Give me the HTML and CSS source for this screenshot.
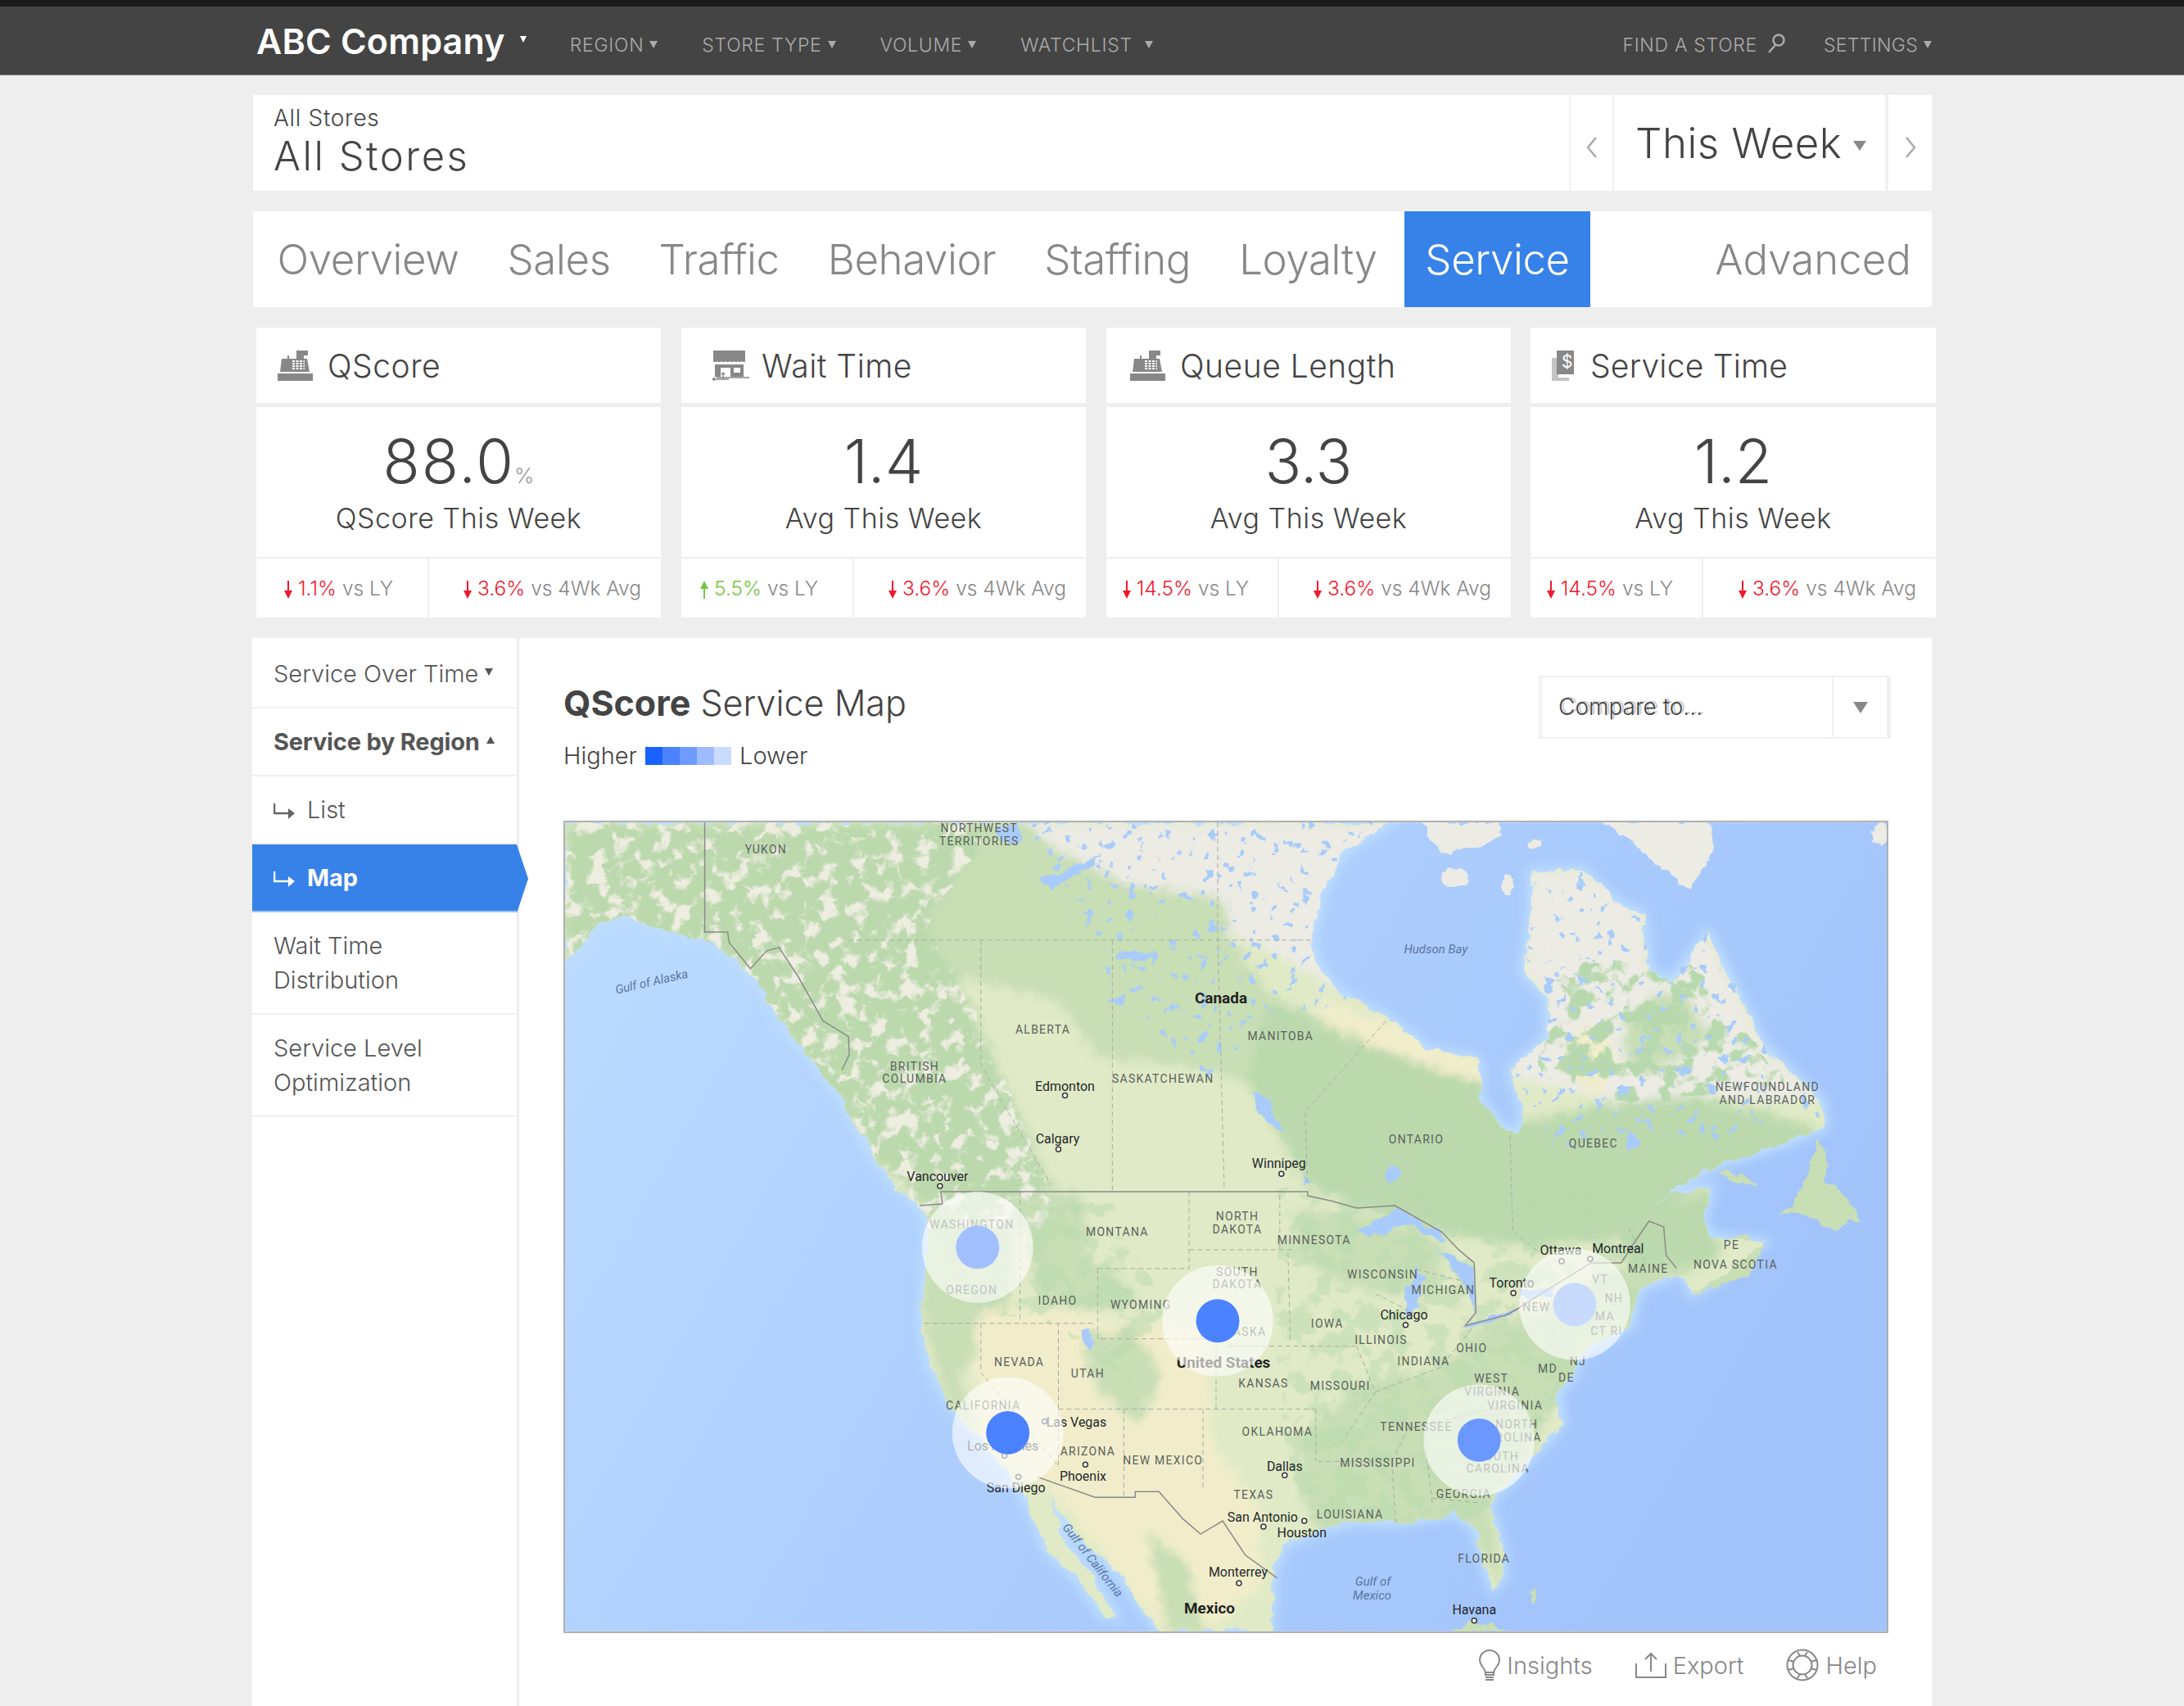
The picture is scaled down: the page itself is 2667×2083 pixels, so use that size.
FILE: index.html
```html
<!DOCTYPE html>
<html lang="en">
<head>
  <meta charset="UTF-8">
  <meta name="viewport" content="width=device-width, initial-scale=1.0">
  <title>ABC Company - Service Map</title>
  <link rel="stylesheet" href="styles.css">
</head>
<body>
  <!-- shared icons -->
  <svg class="icon-defs" aria-hidden="true">
    <defs>
      <symbol id="i-register" viewBox="0 0 43 37">
        <path d="M0 28h43v9H0z"/>
        <path d="M3 26 5 10h7V6h2v4h9V0h14v6h-5v4h4l3 16z"/>
        <path class="i-cut" d="M18 13h15M18 16h15M18 19h15M18 22h15"/>
      </symbol>
      <symbol id="i-store" viewBox="0 0 46 37">
        <path d="M2 0h39v14H2z"/>
        <path class="i-scallop" d="M2 14q2.500 3 5 0q2.500 3 5 0q2.500 3 5 0q2.500 3 5 0q2.500 3 5 0q2.500 3 5 0q2.500 3 5 0q2.500 3 4 0"/>
        <path d="M4 17h35v15H23V21H11v11H4zM27 21v6h8v-6z" fill-rule="evenodd"/>
        <path class="i-line" d="M6 33h40M1 35h20M1 35l3-2M1 35l3 2M14 35v-8M14 27l-2 2M14 27l2 2"/>
      </symbol>
      <symbol id="i-bill" viewBox="0 0 27 37">
        <path class="i-pale" d="M0 9h8v24h13v4H0z"/>
        <path d="M6 0h21v29H6z"/>
      </symbol>
      <symbol id="i-down" viewBox="0 0 10 22">
        <path d="M4 0h2v12h4l-5 10-5-10h4z"/>
      </symbol>
      <symbol id="i-up" viewBox="0 0 10 22">
        <path d="M4 22h2V10h4L5 0 0 10h4z"/>
      </symbol>
      <symbol id="i-sub" viewBox="0 0 26 20">
        <path class="i-bent" d="M1 0v12h18"/>
        <path class="i-head" d="M18 6l8 6-8 7z"/>
      </symbol>
    </defs>
  </svg>

  <header class="topbar">
    <div class="wrap topbar-inner">
      <a class="brand">ABC Company<i class="caret caret-brand"></i></a>
      <nav class="topnav">
        <a>Region<i class="caret"></i></a>
        <a>Store Type<i class="caret"></i></a>
        <a>Volume<i class="caret"></i></a>
        <a>Watchlist<i class="caret caret-far"></i></a>
      </nav>
      <nav class="topnav topnav-right">
        <a>Find a Store
          <svg class="search-icon" viewBox="0 0 22 24"><circle cx="14" cy="8" r="6.500"/><path d="M10 14 2 23"/></svg>
        </a>
        <a class="settings">Settings<i class="caret"></i></a>
      </nav>
    </div>
  </header>

  <div class="wrap">
    <section class="page-head">
      <div class="page-title">
        <div class="crumb">All Stores</div>
        <h1>All Stores</h1>
      </div>
      <a class="period-nav"><svg class="chev" viewBox="0 0 14 26"><path d="M12 1 2 13l10 12"/></svg></a>
      <a class="period">This Week<i class="caret caret-period"></i></a>
      <a class="period-nav period-next"><svg class="chev" viewBox="0 0 14 26"><path d="M2 1l10 12L2 25"/></svg></a>
    </section>

    <nav class="tabs">
      <a>Overview</a>
      <a>Sales</a>
      <a>Traffic</a>
      <a>Behavior</a>
      <a>Staffing</a>
      <a>Loyalty</a>
      <a class="active">Service</a>
      <a class="tab-end">Advanced</a>
    </nav>

    <section class="kpis">
      <article class="kpi">
        <h2><svg class="kpi-icon"><use href="#i-register"/></svg>QScore</h2>
        <div class="kpi-body">
          <div class="kpi-num kpi-num-wide">88.0<span class="unit">%</span></div>
          <div class="kpi-sub">QScore This Week</div>
        </div>
        <div class="kpi-foot">
          <div class="cmp cmp-ly"><svg class="arr down"><use href="#i-down"/></svg><b class="neg">1.1%</b> vs LY</div>
          <div class="cmp"><svg class="arr down"><use href="#i-down"/></svg><b class="neg">3.6%</b> vs 4Wk Avg</div>
        </div>
      </article>
      <article class="kpi kpi-store">
        <h2><svg class="kpi-icon"><use href="#i-store"/></svg>Wait Time</h2>
        <div class="kpi-body">
          <div class="kpi-num">1.4</div>
          <div class="kpi-sub">Avg This Week</div>
        </div>
        <div class="kpi-foot">
          <div class="cmp cmp-ly"><svg class="arr up"><use href="#i-up"/></svg><b class="pos">5.5%</b> vs LY</div>
          <div class="cmp"><svg class="arr down"><use href="#i-down"/></svg><b class="neg">3.6%</b> vs 4Wk Avg</div>
        </div>
      </article>
      <article class="kpi kpi-queue">
        <h2><svg class="kpi-icon"><use href="#i-register"/></svg>Queue Length</h2>
        <div class="kpi-body">
          <div class="kpi-num">3.3</div>
          <div class="kpi-sub">Avg This Week</div>
        </div>
        <div class="kpi-foot">
          <div class="cmp cmp-ly cmp-long"><svg class="arr down"><use href="#i-down"/></svg><b class="neg">14.5%</b> vs LY</div>
          <div class="cmp"><svg class="arr down"><use href="#i-down"/></svg><b class="neg">3.6%</b> vs 4Wk Avg</div>
        </div>
      </article>
      <article class="kpi kpi-time">
        <h2><span class="bill"><svg class="kpi-icon kpi-icon-bill"><use href="#i-bill"/></svg><span class="bill-sign">$</span></span>Service Time</h2>
        <div class="kpi-body">
          <div class="kpi-num">1.2</div>
          <div class="kpi-sub">Avg This Week</div>
        </div>
        <div class="kpi-foot">
          <div class="cmp cmp-ly cmp-long"><svg class="arr down"><use href="#i-down"/></svg><b class="neg">14.5%</b> vs LY</div>
          <div class="cmp"><svg class="arr down"><use href="#i-down"/></svg><b class="neg">3.6%</b> vs 4Wk Avg</div>
        </div>
      </article>
    </section>

    <section class="panel">
      <aside class="sidenav">
        <a>Service Over Time<i class="caret caret-side"></i></a>
        <a class="open">Service by Region<i class="caret caret-side caret-up"></i></a>
        <a class="sub"><svg class="sub-icon"><use href="#i-sub"/></svg>List</a>
        <a class="sub current"><svg class="sub-icon"><use href="#i-sub"/></svg>Map</a>
        <a>Wait Time<br>Distribution</a>
        <a>Service Level<br>Optimization</a>
      </aside>

      <main class="content">
        <div class="content-head">
          <div>
            <h3><strong>QScore</strong> Service Map</h3>
            <div class="legend">
              Higher
              <span class="scale"><i class="s1"></i><i class="s2"></i><i class="s3"></i><i class="s4"></i><i class="s5"></i></span>
              Lower
            </div>
          </div>
          <div class="compare">
            <span class="compare-text">Compare to...</span>
            <span class="compare-btn"><i class="caret caret-compare"></i></span>
          </div>
        </div>

        <!-- map: drawn in page pixels, hence the viewBox offset -->
        <svg class="map" viewBox="688 1003 1618 990">
          <defs>
            <linearGradient id="sea" x1="0" y1="0" x2="1" y2="0.35">
              <stop offset="0" stop-color="#bddcff"/>
              <stop offset=".35" stop-color="#b1d2fe"/>
              <stop offset="1" stop-color="#a2c4fb"/>
            </linearGradient>
            <path id="land" d="M688 1003H1699L1673 1019 1640 1040 1615 1089 1602 1147 1610 1179 1636 1211 1699 1246 1746 1281 1806 1293 1809 1345 1835 1376 1856 1386 1861 1357 1845 1306 1890 1268 1892 1220 1861 1185 1871 1115 1871 1064 1934 1061 1976 1102 2007 1115 2015 1185 2044 1198 2086 1137 2127 1217 2154 1274 2180 1300 2227 1345 2230 1376 2180 1396 2101 1421 2049 1447 1997 1504 2039 1459 2091 1450 2080 1491 2091 1510 2156 1517 2101 1561 2067 1581 2062 1561 2049 1555 2002 1574 1992 1619 1934 1651 1924 1676 1903 1702 1908 1740 1866 1785 1819 1836 1835 1893 1837 1925 1824 1943 1811 1906 1803 1868 1777 1849 1709 1861 1657 1858 1615 1868 1568 1887 1555 1919 1552 1993H1415L1363 1919 1306 1868 1283 1823 1297 1880 1329 1919 1363 1976 1346 1973 1317 1931 1277 1893 1254 1836 1231 1798 1185 1746 1156 1708 1133 1663 1125 1619 1128 1561 1133 1504 1125 1475 1093 1447 1065 1412 1024 1338 984 1287 956 1252 927 1204 892 1166 858 1144 812 1137 766 1118 732 1124 709 1153 688 1172Z"/>
            <clipPath id="land-clip"><use href="#land"/></clipPath>
            <clipPath id="mtn-clip"><path d="M688 1003H1197V1032L1128 1128 1168 1191 1283 1447V1500H1125L1065 1412 892 1166 688 1172Z"/></clipPath>
            <clipPath id="rock-clip"><path d="M1125 1470H1360L1420 1600 1380 1690 1290 1620 1190 1600Z"/></clipPath>
            <clipPath id="north-clip"><path d="M1254 1003H1699L1640 1230 1540 1240 1480 1330 1360 1200ZM1861 1064H2100L2240 1370 2040 1400 1900 1400 1845 1300Z"/></clipPath>
            <clipPath id="east-clip"><path d="M1560 1450H1990L2050 1560 1900 1720 1800 1860 1600 1860 1560 1740Z"/></clipPath>
            <clipPath id="quebec-clip"><path d="M1900 1180 2060 1170 2180 1320 2000 1350 1880 1310Z"/></clipPath>
            <filter id="rough" x="0" y="0" width="1" height="1" color-interpolation-filters="sRGB">
              <feTurbulence type="fractalNoise" baseFrequency=".06" numOctaves="3" seed="7" result="n"/>
              <feDisplacementMap in="SourceGraphic" in2="n" scale="14" xChannelSelector="R" yChannelSelector="G"/>
            </filter>
            <filter id="soft" x="-.05" y="-.05" width="1.100" height="1.100"><feGaussianBlur stdDeviation="6"/></filter>
            <filter id="glow" x="-.1" y="-.1" width="1.200" height="1.200"><feGaussianBlur stdDeviation="7"/></filter>
            <filter id="mottle-pale" x="0" y="0" width="1" height="1" color-interpolation-filters="sRGB">
              <feTurbulence type="fractalNoise" baseFrequency=".05" numOctaves="5" seed="4"/>
              <feColorMatrix type="matrix" values="0 0 0 0 .93 0 0 0 0 .93 0 0 0 0 .88 7 0 0 0 -3.600"/>
            </filter>
            <filter id="mottle-green" x="0" y="0" width="1" height="1" color-interpolation-filters="sRGB">
              <feTurbulence type="fractalNoise" baseFrequency=".035" numOctaves="5" seed="11"/>
              <feColorMatrix type="matrix" values="0 0 0 0 .72 0 0 0 0 .85 0 0 0 0 .68 9 0 0 0 -4.300"/>
            </filter>
            <filter id="speckle" x="0" y="0" width="1" height="1" color-interpolation-filters="sRGB">
              <feTurbulence type="fractalNoise" baseFrequency=".08" numOctaves="2" seed="21"/>
              <feColorMatrix type="matrix" values="0 0 0 0 .66 0 0 0 0 .8 0 0 0 0 .98 22 0 0 0 -14.400"/>
            </filter>
          </defs>

          <rect class="sea" x="688" y="1003" width="1618" height="990"/>
          <use class="coast-glow" href="#land"/>

          <g filter="url(#rough)">
            <g class="islands">
              <path d="M2172 1485 2190 1472 2203 1447 2214 1415 2224 1392 2232 1415 2230 1440 2248 1453 2269 1475 2277 1494 2258 1491 2243 1504 2217 1491 2193 1478Z"/>
              <path d="M2067 1581 2101 1561 2156 1517 2140 1555Z"/>
              <path d="M2105 1512 2135 1507 2140 1515 2110 1518Z"/>
              <path d="M2100 1430 2130 1435 2150 1447 2120 1445Z"/>
              <path class="pale" d="M1955 1003H2091L2094 1038 2065 1086 2023 1051 1992 1026Z"/>
              <path class="pale" d="M1738 1003H1830L1835 1015 1800 1035 1760 1040 1745 1020Z"/>
              <ellipse class="pale" cx="1777" cy="1070" rx="18" ry="11"/>
              <ellipse class="pale" cx="1842" cy="1080" rx="7" ry="14"/>
              <ellipse class="pale" cx="1875" cy="1030" rx="8" ry="5"/>
              <ellipse class="pale" cx="2298" cy="1018" rx="10" ry="14"/>
              <path d="M1772 1993 1798 1979 1845 1993Z"/>
              <ellipse cx="1872" cy="1948" rx="3" ry="9"/>
            </g>

            <g clip-path="url(#land-clip)">
              <rect class="base" x="688" y="1003" width="1618" height="990"/>

              <!-- vegetation, north to south -->
              <g filter="url(#soft)">
                <path class="forest" d="M1197 1003H1254L1283 1032 1369 1077 1495 1096 1500 1140 1552 1217 1521 1319 1440 1300 1340 1290 1290 1220 1168 1191 1128 1128 1197 1032Z"/>
                <path class="forest-deep" d="M1552 1217 1631 1255 1693 1281 1803 1313 1861 1370 1971 1345 2075 1338 2222 1376 2180 1415 2075 1447 1997 1510 1866 1523 1761 1504 1657 1472 1594 1447 1568 1396 1521 1319Z"/>
                <path class="tundra" d="M1254 1003H1699L1640 1211 1552 1160 1500 1140 1495 1096 1369 1077 1283 1032Z"/>
                <path class="tundra" d="M1871 1064 1934 1061 2007 1115 2015 1185 2086 1137 2154 1274 2227 1345 2075 1338 1971 1345 1845 1313 1892 1220 1861 1185Z"/>
                <path class="forest" d="M1985 1240 2030 1210 2060 1215 2090 1265 2050 1295 2005 1310 1985 1285Z"/>
                <path class="sand" d="M1620 1222 1700 1250 1810 1296 1820 1325 1740 1300 1660 1270 1600 1240Z"/>
                <path class="sand" d="M1915 1260 1960 1250 1975 1290 1955 1340 1915 1310Z"/>
                <path class="forest-deep" d="M1980 1500 2090 1450 2100 1500 2100 1540 2050 1555 1990 1570Z"/>
                <path class="forest-deep" d="M688 1003H1197V1032L1128 1128 1168 1191 1283 1447V1470H1125L1065 1412 892 1166 688 1172Z"/>

                <path class="forest" d="M1125 1470H1240L1230 1600 1170 1680 1195 1750 1150 1700 1125 1600Z"/>
                <path class="forest" d="M1240 1455H1320L1330 1540 1370 1560 1390 1590 1320 1600 1270 1580Z"/>
                <path class="sand" d="M1195 1600H1310L1350 1615 1470 1620 1480 1760 1540 1850 1540 1940 1470 1993H1420L1340 1890 1283 1820 1230 1790 1190 1740 1190 1640Z"/>
                <path class="forest" d="M1320 1640 1380 1620 1420 1680 1390 1740 1340 1700Z"/>
                <path class="forest" d="M1400 1870 1450 1910 1470 1993H1425Z"/>
                <path class="forest" d="M1580 1480H1660L1770 1520 1750 1580 1680 1580 1620 1560 1590 1530Z"/>
                <path class="forest" d="M1590 1760 1660 1690 1760 1670 1810 1620 1900 1600 1950 1560 2050 1540 2000 1620 1903 1702 1866 1785 1819 1836 1840 1950 1790 1860 1709 1870 1615 1880 1590 1830Z"/>
              </g>

              <!-- terrain texture -->
              <g clip-path="url(#mtn-clip)">
                <rect class="tex" filter="url(#mottle-pale)" x="688" y="1003" width="620" height="520"/>
              </g>
              <g clip-path="url(#rock-clip)">
                <rect class="tex tex-faint" filter="url(#mottle-green)" x="1125" y="1450" width="310" height="250"/>
              </g>
              <g clip-path="url(#east-clip)">
                <rect class="tex tex-faint" filter="url(#mottle-green)" x="1560" y="1450" width="500" height="420"/>
              </g>
              <g clip-path="url(#quebec-clip)">
                <rect class="tex" filter="url(#mottle-green)" x="1880" y="1170" width="300" height="180"/>
              </g>
              <g clip-path="url(#north-clip)">
                <rect class="tex" filter="url(#speckle)" x="1254" y="1003" width="990" height="400"/>
              </g>

              <!-- lakes -->
              <g class="lake">
                <path d="M1657 1504 1709 1475 1756 1504 1767 1517 1720 1494 1678 1510Z"/>
                <path d="M1718 1606 1715 1580 1730 1548 1740 1560 1730 1600Z"/>
                <path d="M1756 1523 1801 1549 1803 1606 1793 1577 1777 1549Z"/>
                <path d="M1788 1619 1856 1597 1845 1606 1798 1622Z"/>
                <path d="M1856 1577 1900 1571 1895 1580 1860 1587Z"/>
                <path d="M1531 1332 1550 1345 1568 1383 1552 1375 1535 1352Z"/>
                <path d="M1268 1072 1300 1062 1345 1042 1312 1070 1282 1085Z"/>
                <path d="M1212 1010 1240 1005 1245 1025 1222 1030Z"/>
                <path d="M1358 1168 1385 1160 1412 1170 1385 1172Z"/>
                <ellipse cx="1701" cy="1434" rx="9" ry="11"/>
                <ellipse cx="1995" cy="1393" rx="8" ry="9"/>
                <path d="M1590 1435 1600 1445 1590 1450Z"/>
                <path d="M1350 1220 1375 1215 1370 1228Z"/>
                <ellipse cx="1328" cy="1635" rx="5" ry="12"/>
              </g>
            </g>
          </g>

          <!-- borders -->
          <path class="edge-soft" d="M1035 1147H1602M1197 1147V1300L1283 1447M1358 1147V1453M1487 1003V1147L1495 1453M1693 1246 1594 1357 1597 1447M1845 1386 1848 1504 1882 1530M1245 1455V1612M1128 1616H1334M1340 1549V1635H1500M1340 1549H1452V1455M1452 1526H1580M1197 1616V1676L1292 1791V1616M1292 1721H1607M1372 1721V1829M1469 1721V1817M1485 1635V1721M1563 1459V1526M1573 1530 1576 1638M1500 1644H1657M1607 1721V1785M1657 1644 1680 1700 1640 1760M1680 1700 1760 1670 1800 1620M1610 1785H1700L1720 1745 1850 1715M1700 1785 1705 1860M1740 1750 1750 1840M1750 1830 1810 1836M1790 1770 1830 1800 1866 1770M1730 1550 1790 1565M1680 1580 1740 1610M1990 1500 2010 1540"/>
          <path class="edge" d="M859 1003V1137H887L889 1150 915 1182 935 1160 950 1156 973 1191 1004 1246 1035 1265 1036 1287 1027 1306M1122 1472 1150 1470 1148 1455H1597V1460L1625 1466 1657 1475 1704 1472 1761 1504 1782 1526 1801 1542 1803 1603 1790 1619 1840 1606 1856 1597 1897 1571 1944 1542H1981L1997 1517 2015 1491 2033 1498 2036 1533 2049 1549M1266 1804 1337 1829H1386V1822H1415L1444 1855 1466 1874 1493 1858 1521 1900 1560 1928"/>

          <!-- labels -->
          <g class="lbl-state">
            <text x="934" y="1036">YUKON</text>
            <text x="1195" y="1010">NORTHWEST</text><text x="1195" y="1026">TERRITORIES</text>
            <text x="1273" y="1256">ALBERTA</text>
            <text x="1116" y="1302">BRITISH</text><text x="1116" y="1317">COLUMBIA</text>
            <text x="1420" y="1317">SASKATCHEWAN</text>
            <text x="1564" y="1264">MANITOBA</text>
            <text x="1730" y="1391">ONTARIO</text>
            <text x="1947" y="1396">QUEBEC</text>
            <text x="2160" y="1327">NEWFOUNDLAND</text><text x="2160" y="1343">AND LABRADOR</text>
            <text x="2116" y="1520">PE</text>
            <text x="2121" y="1544">NOVA SCOTIA</text>
            <text x="2014" y="1549">MAINE</text>
            <text x="1186" y="1495">WASHINGTON</text>
            <text x="1186" y="1575">OREGON</text>
            <text x="1364" y="1504">MONTANA</text>
            <text x="1291" y="1588">IDAHO</text>
            <text x="1393" y="1593">WYOMING</text>
            <text x="1511" y="1485">NORTH</text><text x="1511" y="1501">DAKOTA</text>
            <text x="1511" y="1553">SOUTH</text><text x="1511" y="1568">DAKOTA</text>
            <text x="1506" y="1626">NEBRASKA</text>
            <text x="1543" y="1689">KANSAS</text>
            <text x="1244" y="1663">NEVADA</text>
            <text x="1328" y="1677">UTAH</text>
            <text x="1200" y="1717">CALIFORNIA</text>
            <text x="1328" y="1773">ARIZONA</text>
            <text x="1420" y="1784">NEW MEXICO</text>
            <text x="1560" y="1749">OKLAHOMA</text>
            <text x="1531" y="1826">TEXAS</text>
            <text x="1605" y="1514">MINNESOTA</text>
            <text x="1621" y="1616">IOWA</text>
            <text x="1637" y="1692">MISSOURI</text>
            <text x="1689" y="1556">WISCONSIN</text>
            <text x="1763" y="1575">MICHIGAN</text>
            <text x="1687" y="1636">ILLINOIS</text>
            <text x="1739" y="1662">INDIANA</text>
            <text x="1798" y="1646">OHIO</text>
            <text x="1730" y="1743">TENNESSEE</text>
            <text x="1683" y="1787">MISSISSIPPI</text>
            <text x="1649" y="1850">LOUISIANA</text>
            <text x="1788" y="1825">GEORGIA</text>
            <text x="1813" y="1904">FLORIDA</text>
            <text x="1822" y="1683">WEST</text><text x="1823" y="1699">VIRGINIA</text>
            <text x="1851" y="1717">VIRGINIA</text>
            <text x="1853" y="1740">NORTH</text><text x="1845" y="1756">CAROLINA</text>
            <text x="1830" y="1779">SOUTH</text><text x="1830" y="1794">CAROLINA</text>
            <text x="1900" y="1596">NEW YORK</text>
            <text x="1955" y="1562">VT</text>
            <text x="1972" y="1585">NH</text>
            <text x="1961" y="1607">MA</text>
            <text x="1963" y="1625">CT RI</text>
            <text x="1891" y="1671">MD</text>
            <text x="1914" y="1682">DE</text>
            <text x="1928" y="1662">NJ</text>
          </g>
          <g class="lbl-city">
            <text x="1300" y="1326">Edmonton</text>
            <text x="1291" y="1390">Calgary</text>
            <text x="1144" y="1436">Vancouver</text>
            <text x="1562" y="1420">Winnipeg</text>
            <text x="1314" y="1737">Las Vegas</text>
            <text x="1224" y="1766">Los Angeles</text>
            <text x="1322" y="1803">Phoenix</text>
            <text x="1240" y="1817">San Diego</text>
            <text x="1569" y="1791">Dallas</text>
            <text x="1542" y="1853">San Antonio</text>
            <text x="1590" y="1872">Houston</text>
            <text x="1512" y="1921">Monterrey</text>
            <text x="1801" y="1967">Havana</text>
            <text x="1715" y="1606">Chicago</text>
            <text x="1847" y="1567">Toronto</text>
            <text x="1907" y="1527">Ottawa</text>
            <text x="1977" y="1525">Montreal</text>
          </g>
          <g class="lbl-country">
            <text x="1491" y="1218">Canada</text>
            <text x="1494" y="1664">United States</text>
            <text x="1477" y="1965">Mexico</text>
          </g>
          <g class="lbl-water">
            <text x="794" y="1198" transform="rotate(-13 794 1198)">Gulf of Alaska</text>
            <text x="1334" y="1906" transform="rotate(52 1334 1906)">Gulf of California</text>
            <text x="1754" y="1158">Hudson Bay</text>
            <text x="1677" y="1932">Gulf of</text><text x="1676" y="1949">Mexico</text>
          </g>
          <g class="city-dot">
            <circle cx="1300" cy="1337" r="3"/><circle cx="1292" cy="1403" r="3"/><circle cx="1147" cy="1448" r="3"/>
            <circle cx="1565" cy="1433" r="3"/><circle cx="1275" cy="1736" r="3"/><circle cx="1226" cy="1778" r="3"/>
            <circle cx="1325" cy="1789" r="3"/><circle cx="1243" cy="1804" r="3"/><circle cx="1569" cy="1802" r="3"/>
            <circle cx="1543" cy="1865" r="3"/><circle cx="1593" cy="1858" r="3"/><circle cx="1513" cy="1934" r="3"/>
            <circle cx="1801" cy="1980" r="3"/><circle cx="1717" cy="1618" r="3"/><circle cx="1849" cy="1579" r="3"/>
            <circle cx="1908" cy="1540" r="3"/><circle cx="1943" cy="1537" r="3"/>
          </g>

          <!-- store pins -->
          <g class="pin-halo">
            <circle cx="1193" cy="1523" r="68"/><circle cx="1487" cy="1613" r="68"/><circle cx="1230" cy="1750" r="68"/>
            <circle cx="1807" cy="1759" r="68"/><circle cx="1924" cy="1593" r="68"/>
          </g>
          <circle class="pin p4" cx="1193" cy="1523" r="26.500"/>
          <circle class="pin p2" cx="1487" cy="1613" r="26.500"/>
          <circle class="pin p2" cx="1230" cy="1750" r="26.500"/>
          <circle class="pin p3" cx="1807" cy="1759" r="26.500"/>
          <circle class="pin p5" cx="1924" cy="1593" r="26.500"/>
        </svg>

        <div class="map-links">
          <a><svg class="link-icon bulb" viewBox="0 0 26 39"><path d="M8 28C7 22 1 20 1 13a12 12 0 0 1 24 0c0 7-6 9-7 15zM8 28v3h10v-3M8 34h10M8 37h10"/></svg>Insights</a>
          <a><svg class="link-icon share" viewBox="0 0 38 32"><path d="M1 14v17h36V14M19 24V2M12 9l7-7 7 7"/></svg>Export</a>
          <a><svg class="link-icon buoy" viewBox="0 0 40 40"><circle cx="20" cy="20" r="18.500"/><circle cx="20" cy="20" r="11.500"/><path d="M14 4l3 5M26 4l-3 5M3 14l7 2M37 14l-7 2M3 26l7-2M37 26l-7-2M14 36l3-5M26 36l-3-5"/></svg>Help</a>
        </div>
      </main>
    </section>
  </div>
</body>
</html>
```

FILE: styles.css
```css
* {
  margin: 0;
  padding: 0;
  box-sizing: border-box;
}

body {
  font-family: Inter, 'Liberation Sans', sans-serif;
  font-weight: 300;
  background-color: #eeeeee;
  color: #444;
  height: 100vh;
  overflow: hidden;
}

.icon-defs {
  position: absolute;
  width: 0;
  height: 0;
}

.wrap {
  width: 2050px;
  margin-left: 309px;
}

/* Carets */
.caret {
  display: inline-block;
  width: 0;
  height: 0;
  margin-left: 7px;
  border-left: 5px solid transparent;
  border-right: 5px solid transparent;
  border-top: 9px solid currentColor;
  vertical-align: 3px;
}

.caret-brand {
  margin-left: 18px;
  vertical-align: 14px;
  border-top-width: 8px;
  border-left-width: 4px;
  border-right-width: 4px;
}

.caret-far {
  margin-left: 15px;
}

.caret-period {
  margin-left: 14px;
  color: #888;
  border-left-width: 8px;
  border-right-width: 8px;
  border-top-width: 12px;
  vertical-align: 10px;
}

.caret-side {
  margin-left: 8px;
  vertical-align: 8px;
  border-top-width: 9px;
}

.caret-up {
  border-top: 0;
  border-bottom: 9px solid currentColor;
}

.caret-compare {
  margin: 0;
  color: #888;
  border-left-width: 9px;
  border-right-width: 9px;
  border-top-width: 14px;
  vertical-align: middle;
}

/* Top bar */
.topbar {
  height: 92px;
  background-color: #444;
  border-top: 8px solid #1a1a1a;
  border-bottom: 1px solid #777;
  color: #aaa;
}

.topbar-inner {
  display: flex;
  align-items: center;
  height: 83px;
  padding-left: 4px;
}

.brand {
  color: #fff;
  font-size: 43px;
  font-weight: 600;
  letter-spacing: 0.2px;
  white-space: nowrap;
}

.topnav {
  display: flex;
  gap: 54px;
  margin-left: 53px;
  padding-top: 10px;
}

.topnav a {
  font-size: 23px;
  letter-spacing: 0.7px;
  text-transform: uppercase;
  white-space: nowrap;
  display: flex;
  align-items: center;
}

.topnav .caret {
  vertical-align: 0;
}

.topnav-right {
  margin-left: auto;
  gap: 47px;
}

.topnav .settings {
  letter-spacing: 0.3px;
}

.search-icon {
  width: 22px;
  height: 24px;
  margin-left: 12px;
  margin-top: -4px;
  fill: none;
  stroke: #aaa;
  stroke-width: 2.500;
}

/* Page header */
.page-head {
  display: flex;
  height: 117px;
  margin-top: 24px;
  background-color: #fff;
}

.page-title {
  flex: 1;
  padding: 11px 25px 0;
}

.crumb {
  font-size: 28px;
  letter-spacing: 0.7px;
  line-height: 34px;
}

.page-title h1 {
  font-size: 49px;
  font-weight: 300;
  letter-spacing: 2.500px;
  line-height: 58px;
  margin-top: 1px;
}

.period-nav {
  display: flex;
  justify-content: center;
  align-items: center;
  width: 53px;
  padding-top: 11px;
  border-left: 2px solid #f0f0f0;
}

.period-next {
  width: 55px;
}

.chev {
  width: 14px;
  height: 26px;
  fill: none;
  stroke: #aaa;
  stroke-width: 2.500;
}

.period {
  display: flex;
  align-items: center;
  width: 335px;
  padding: 0 0 0 26px;
  border-left: 2px solid #f0f0f0;
  border-right: 2px solid #f0f0f0;
  font-size: 51px;
  letter-spacing: 0.5px;
  white-space: nowrap;
}

.period .caret {
  vertical-align: 0;
  margin-top: 6px;
}

/* Tabs */
.tabs {
  display: flex;
  height: 117px;
  margin-top: 25px;
  background-color: #fff;
  font-size: 51px;
  letter-spacing: -0.4px;
  line-height: 117px;
  color: #888;
}

.tabs a {
  padding: 0 29.500px;
  white-space: nowrap;
}

.tabs a.active {
  margin-left: 4px;
  padding: 0 25px;
  background-color: #3682e8;
  color: #fff;
}

.tabs .tab-end {
  margin-left: auto;
  padding-right: 25px;
  letter-spacing: 0;
}

/* KPI cards */
.kpis {
  display: grid;
  grid-template-columns: repeat(4, 494px);
  gap: 25px;
  margin: 25px 0 0 4px;
}

.kpi {
  background-color: #fff;
}

.kpi h2 {
  display: flex;
  align-items: center;
  height: 97px;
  padding: 0 0 0 26px;
  border-bottom: 5px solid #eee;
  font-size: 39px;
  font-weight: 300;
  letter-spacing: 0.5px;
  white-space: nowrap;
}

.kpi-store h2 {
  padding-left: 37px;
}

.kpi-store .kpi-icon {
  width: 46px;
  margin-right: 15px;
}

.kpi-queue h2 {
  padding-left: 29px;
}

.kpi-time {
  margin-left: -1px;
}

.kpi-time h2 {
  letter-spacing: 0.2px;
}

.kpi-icon {
  width: 43px;
  height: 37px;
  margin-right: 18px;
  fill: #888;
  flex: none;
}

.i-cut {
  fill: none;
  stroke: #fff;
  stroke-width: 2;
  stroke-dasharray: 3 1.500;
}

.i-scallop {
  fill: none;
  stroke: #fff;
  stroke-width: 1.500;
}

.i-line {
  fill: none;
  stroke: #888;
  stroke-width: 1.500;
}

.i-pale {
  fill: #c4c4c4;
}

.bill {
  position: relative;
  display: block;
  margin-right: 20px;
  height: 37px;
}

.kpi-icon-bill {
  display: block;
  width: 27px;
  margin: 0;
}

.bill-sign {
  position: absolute;
  left: 12px;
  top: 1px;
  font-size: 21px;
  font-weight: 400;
  color: #fff;
  letter-spacing: 0;
}

.kpi-body {
  height: 185px;
  padding-top: 26px;
  text-align: center;
  border-bottom: 2px solid #eee;
}

.kpi-num {
  font-size: 74px;
  line-height: 80px;
}

.kpi-num-wide {
  letter-spacing: 2px;
}

.unit {
  margin-left: -1px;
  font-size: 26px;
  line-height: 22px;
  letter-spacing: 0;
  color: #999;
}

.kpi-sub {
  margin-top: 10px;
  font-size: 34px;
  letter-spacing: 0.5px;
  line-height: 40px;
}

.kpi-foot {
  display: grid;
  grid-template-columns: 211px 1fr;
  height: 72px;
  font-size: 24.500px;
  color: #888;
}

.cmp {
  display: flex;
  align-items: center;
  justify-content: flex-end;
  padding-right: 24px;
  white-space: pre;
}

.cmp-ly {
  padding-right: 42px;
  border-right: 2px solid #eee;
}

.cmp-long {
  padding-right: 35px;
}

.cmp b {
  font-weight: 300;
}

.arr {
  width: 10px;
  height: 22px;
  margin-right: 7px;
  margin-top: 3px;
}

.arr.down {
  fill: #f0192c;
}

.arr.up {
  fill: #76c442;
}

.neg {
  color: #f0192c;
}

.pos {
  color: #76c442;
}

/* Lower panel */
.panel {
  display: flex;
  height: 1400px;
  margin: 25px 0 0 -1px;
  background-color: #fff;
}

.sidenav {
  width: 326px;
  flex: none;
  padding-top: 3px;
  border-right: 3px solid #eee;
  font-size: 29px;
  color: #555;
}

.sidenav a {
  display: block;
  position: relative;
  width: 323px;
  padding: 19.500px 0 19.500px 26px;
  line-height: 42px;
  border-bottom: 2px solid #f0f0f0;
  white-space: nowrap;
}

.sidenav .open {
  font-weight: 700;
  letter-spacing: -0.2px;
}

.sub-icon {
  width: 26px;
  height: 20px;
  margin-right: 15px;
  vertical-align: -2px;
  color: #666;
}

.i-bent {
  fill: none;
  stroke: currentColor;
  stroke-width: 2.500;
}

.i-head {
  fill: currentColor;
}

.sidenav .current {
  background-color: #3682e8;
  color: #fff;
  font-weight: 700;
  border-bottom: 2px solid #9fc2f3;
}

.sidenav .current .sub-icon {
  color: #fff;
}

.sidenav .current::after {
  content: "";
  position: absolute;
  left: 100%;
  top: 0;
  border-left: 14px solid #3682e8;
  border-top: 42px solid transparent;
  border-bottom: 42px solid transparent;
}

.content {
  flex: 1;
  padding: 46px 52px 0 54px;
}

.content-head {
  display: flex;
  justify-content: space-between;
  align-items: flex-start;
  height: 177px;
}

.content-head h3 {
  margin-top: 8px;
  font-size: 43px;
  font-weight: 300;
  line-height: 50px;
}

.content-head strong {
  font-weight: 700;
}

.legend {
  display: flex;
  align-items: center;
  gap: 10px;
  margin-top: 20px;
  font-size: 29px;
  line-height: 40px;
}

.scale {
  display: flex;
}

.scale i {
  width: 21px;
  height: 22px;
}

.s1 { background-color: #1a62ff; }
.s2 { background-color: #4a82ff; }
.s3 { background-color: #6f9bff; }
.s4 { background-color: #9fbcff; }
.s5 { background-color: #c9dbff; }

.compare {
  display: flex;
  width: 430px;
  height: 77px;
  margin-right: -2px;
  border: 2px solid #f0f0f0;
}

.compare-text {
  flex: 1;
  padding-left: 19px;
  font-size: 28px;
  font-weight: 300;
  line-height: 73px;
  text-shadow: 3px -1px 0 #ccc;
  border-left: 3px solid #f6f6f6;
}

.compare-btn {
  display: flex;
  justify-content: center;
  align-items: center;
  width: 70px;
  border-left: 2px solid #f0f0f0;
  border-right: 3px solid #f0f0f0;
}

/* Map */
.map {
  display: block;
  width: 1618px;
  height: 992px;
  border: 2px solid #b0b0b0;
}

.sea { fill: url(#sea); }
.coast-glow { fill: #bfdfff; stroke: #bfdfff; stroke-width: 10px; filter: url(#glow); }
.base { fill: #e0eac6; }
.forest { fill: #c8deb5; }
.forest-deep { fill: #bcd9ad; }
.tundra { fill: #ecebe4; }
.sand { fill: #f1edcb; }
.tex { fill: #000; }
.tex-faint { opacity: 0.5; }
.lake { fill: #a9cbfb; }
.islands { fill: #c8deb5; }
.islands .pale { fill: #ecebe4; }

.edge {
  fill: none;
  stroke: #8b8b8b;
  stroke-width: 1.500px;
}

.edge-soft {
  fill: none;
  stroke: #a9ada3;
  stroke-width: 1px;
  stroke-dasharray: 6 4;
}

.map text {
  font-family: Roboto, 'Liberation Sans', sans-serif;
  text-anchor: middle;
  dominant-baseline: central;
}

.lbl-state text {
  font-size: 14px;
  font-weight: 400;
  letter-spacing: 1.300px;
  fill: #5a625c;
}

.lbl-city text {
  font-size: 16px;
  font-weight: 400;
  fill: #24282a;
}

.lbl-country text {
  font-size: 19px;
  font-weight: 700;
  fill: #222;
}

.lbl-water text {
  font-size: 15px;
  font-style: italic;
  font-weight: 400;
  fill: #5b769e;
}

.city-dot circle {
  fill: #fff;
  stroke: #333;
  stroke-width: 1.500px;
}

.pin-halo {
  fill: #fff;
  opacity: 0.62;
}

.p2 { fill: #4a82ff; }
.p3 { fill: #6a98ff; }
.p4 { fill: #a2bfff; }
.p5 { fill: #c9daff; }

/* Links under the map */
.map-links {
  display: flex;
  justify-content: flex-end;
  gap: 52px;
  margin-top: 18px;
  padding-right: 15px;
  font-size: 29px;
  color: #888;
}

.map-links a {
  display: flex;
  align-items: center;
  gap: 8px;
  height: 42px;
}

.link-icon {
  fill: none;
  stroke: #888;
  stroke-width: 2px;
}

.bulb {
  width: 26px;
  height: 39px;
}

.share {
  width: 38px;
  height: 32px;
}

.buoy {
  width: 40px;
  height: 40px;
}
```
